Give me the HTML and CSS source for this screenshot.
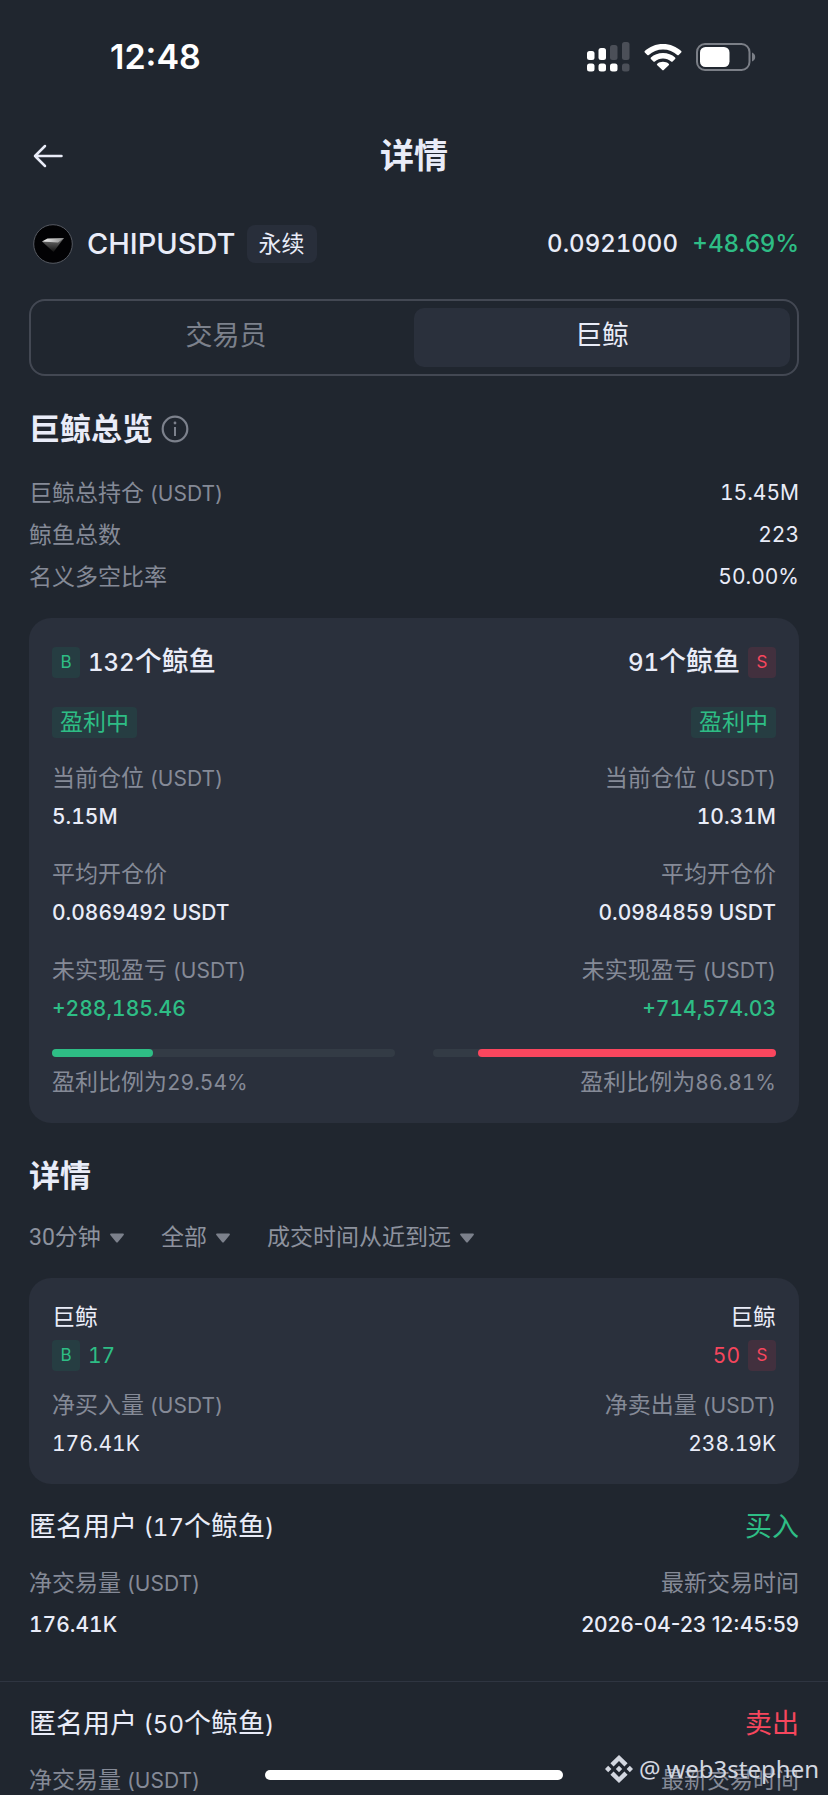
FILE: index.html
```html
<!DOCTYPE html>
<html lang="zh-CN">
<head>
<meta charset="utf-8">
<meta name="viewport" content="width=device-width, initial-scale=1">
<title>详情</title>
<link rel="stylesheet" href="styles.css">
</head>
<body>
<div class="app">
  <div class="status-bar">
    <span class="clock">12:48</span>
    <div class="status-icons">
      <svg width="43" height="30" viewBox="0 0 43 30" aria-hidden="true">
        <g fill="#fff">
          <rect x="0" y="9" width="7.500" height="9" rx="2.500"/><rect x="11.500" y="6" width="7.500" height="12" rx="2.500"/>
          <rect x="0" y="21.500" width="7.500" height="8" rx="2.500"/><rect x="11.500" y="21.500" width="7.500" height="8" rx="2.500"/><rect x="23" y="21.500" width="7.500" height="8" rx="2.500"/>
        </g>
        <g fill="#4b4f58">
          <rect x="23" y="3" width="7.500" height="15" rx="2.500"/><rect x="35" y="0" width="7.500" height="18" rx="2.500"/><rect x="35" y="21.500" width="7.500" height="8" rx="2.500"/>
        </g>
      </svg>
      <svg width="38" height="28" viewBox="0 0 38 28" aria-hidden="true">
        <path fill="#fff" d="M19 1C11.800 1 5.400 3.700.8 8.100c-.5.5-.5 1 0 1.500l2.500 2.400c.5.500 1 .4 1.500 0C8.500 8.500 13.500 6.500 19 6.500s10.500 2 14.200 5.500c.5.400 1 .5 1.500 0l2.500-2.400c.5-.5.500-1 0-1.500C32.600 3.700 26.200 1 19 1z"/>
        <path fill="#fff" d="M19 10c-4.700 0-8.900 1.700-12.100 4.500-.5.500-.5 1 0 1.500l2.500 2.400c.5.500 1 .4 1.500 0 2.200-1.800 5-2.900 8.100-2.900s5.900 1.100 8.100 2.900c.5.400 1 .5 1.500 0l2.500-2.400c.5-.5.500-1 0-1.500C27.900 11.700 23.700 10 19 10z"/>
        <path fill="#fff" d="M19 18.800c-2.200 0-4.200.7-5.700 1.900-.6.500-.5 1 0 1.500l5 4.900c.5.500.9.500 1.400 0l5-4.900c.5-.5.600-1 0-1.500-1.500-1.200-3.500-1.900-5.700-1.900z"/>
      </svg>
      <svg width="60" height="28" viewBox="0 0 60 28" aria-hidden="true">
        <rect x="1" y="1" width="52.500" height="26" rx="8" fill="none" stroke="#7b7f87" stroke-width="2"/>
        <rect x="4" y="4" width="29.500" height="20" rx="5.500" fill="#fff"/>
        <path d="M56 9.500c2 .8 3.200 2.500 3.200 4.500S58 17.700 56 18.500z" fill="#7b7f87"/>
      </svg>
    </div>
  </div>

  <header class="nav">
    <button class="back" type="button" aria-label="返回">
      <svg width="30" height="24" viewBox="0 0 30 24" fill="none" stroke="#e9ecf8" stroke-width="2.500" stroke-linecap="round" stroke-linejoin="round"><path d="M28.500 12H2M12 2 2 12l10 10"/></svg>
    </button>
    <h1>详情</h1>
  </header>

  <main>
    <div class="pair">
      <svg class="coin" width="40" height="40" viewBox="0 0 40 40" aria-hidden="true">
        <defs>
          <linearGradient id="face" x1="0" y1="0" x2="1" y2="0"><stop offset="0" stop-color="#f4f4f4"/><stop offset="1" stop-color="#8c8c8c"/></linearGradient>
          <linearGradient id="tip" x1="0" y1="0" x2="0" y2="1"><stop offset="0" stop-color="#777"/><stop offset="1" stop-color="#111"/></linearGradient>
        </defs>
        <circle cx="20" cy="20" r="19.300" fill="#020204" stroke="#565a62" stroke-width="1"/>
        <path d="M9 17.500 31 14 20.500 28z" fill="url(#tip)"/>
        <path d="M9 17.500 14.500 14.500 31 14 25 18.500z" fill="url(#face)"/>
      </svg>
      <span class="symbol">CHIPUSDT</span>
      <span class="tag">永续</span>
      <span class="price">0.0921000</span>
      <span class="change up">+48.69%</span>
    </div>

    <div class="tabs" role="tablist">
      <button type="button" role="tab" aria-selected="false" class="tab">交易员</button>
      <button type="button" role="tab" aria-selected="true" class="tab active">巨鲸</button>
    </div>

    <section>
      <div class="heading">
        <h2>巨鲸总览</h2>
        <button class="info" type="button" aria-label="说明">
          <svg width="28" height="28" viewBox="0 0 28 28" fill="none" stroke="#7c818c"><circle cx="14" cy="14" r="12.300" stroke-width="2.200"/><path d="M14 12v9" stroke-width="2"/><circle cx="14" cy="8" r="1.400" fill="#7c818c" stroke="none"/></svg>
        </button>
      </div>
      <dl class="summary">
        <div><dt>巨鲸总持仓<span class="lat"> (USDT)</span></dt><dd>15.45M</dd></div>
        <div><dt>鲸鱼总数</dt><dd>223</dd></div>
        <div><dt>名义多空比率</dt><dd>50.00%</dd></div>
      </dl>

      <div class="card overview">
        <div class="side">
          <div class="count"><span class="badge buy">B</span><span><span class="lat">132</span>个鲸鱼</span></div>
          <span class="state">盈利中</span>
          <dl class="stats">
            <div><dt>当前仓位<span class="lat"> (USDT)</span></dt><dd>5.15M</dd></div>
            <div><dt>平均开仓价</dt><dd>0.0869492 USDT</dd></div>
            <div><dt>未实现盈亏<span class="lat"> (USDT)</span></dt><dd class="up">+288,185.46</dd></div>
          </dl>
          <div class="bar"><div class="fill buy-fill" style="width:29.54%"></div></div>
          <p class="ratio">盈利比例为<span class="lat">29.54%</span></p>
        </div>
        <div class="side right">
          <div class="count"><span><span class="lat">91</span>个鲸鱼</span><span class="badge sell">S</span></div>
          <span class="state">盈利中</span>
          <dl class="stats">
            <div><dt>当前仓位<span class="lat"> (USDT)</span></dt><dd>10.31M</dd></div>
            <div><dt>平均开仓价</dt><dd>0.0984859 USDT</dd></div>
            <div><dt>未实现盈亏<span class="lat"> (USDT)</span></dt><dd class="up">+714,574.03</dd></div>
          </dl>
          <div class="bar"><div class="fill sell-fill" style="width:86.81%"></div></div>
          <p class="ratio">盈利比例为<span class="lat">86.81%</span></p>
        </div>
      </div>
    </section>

    <section class="details">
      <div class="heading"><h2>详情</h2></div>
      <div class="filters">
        <label class="filter"><select aria-label="时间范围"><option>30分钟</option></select><svg width="14" height="10" viewBox="0 0 14 10" aria-hidden="true"><path d="M1 .5h12c.8 0 1.200.8.7 1.400L8 9c-.6.700-1.400.7-2 0L.3 1.900C-.2 1.300.2.500 1 .5z" fill="#7c818c"/></svg></label>
        <label class="filter"><select aria-label="类型"><option>全部</option></select><svg width="14" height="10" viewBox="0 0 14 10" aria-hidden="true"><path d="M1 .5h12c.8 0 1.200.8.7 1.400L8 9c-.6.700-1.400.7-2 0L.3 1.900C-.2 1.300.2.500 1 .5z" fill="#7c818c"/></svg></label>
        <label class="filter"><select aria-label="排序"><option>成交时间从近到远</option></select><svg width="14" height="10" viewBox="0 0 14 10" aria-hidden="true"><path d="M1 .5h12c.8 0 1.200.8.7 1.400L8 9c-.6.700-1.400.7-2 0L.3 1.900C-.2 1.300.2.500 1 .5z" fill="#7c818c"/></svg></label>
      </div>

      <div class="card flow">
        <div class="side">
          <p class="who">巨鲸</p>
          <div class="tally up"><span class="badge buy">B</span><span>17</span></div>
          <dl class="stats"><div><dt>净买入量<span class="lat"> (USDT)</span></dt><dd>176.41K</dd></div></dl>
        </div>
        <div class="side right">
          <p class="who">巨鲸</p>
          <div class="tally down"><span>50</span><span class="badge sell">S</span></div>
          <dl class="stats"><div><dt>净卖出量<span class="lat"> (USDT)</span></dt><dd>238.19K</dd></div></dl>
        </div>
      </div>
    </section>

    <ul class="trades">
      <li>
        <div class="row title"><h3>匿名用户<span class="lat"> (17</span>个鲸鱼<span class="lat">)</span></h3><span class="up">买入</span></div>
        <div class="row label"><span>净交易量<span class="lat"> (USDT)</span></span><span>最新交易时间</span></div>
        <div class="row value"><span>176.41K</span><time datetime="2026-04-23T12:45:59">2026-04-23 12:45:59</time></div>
      </li>
      <li>
        <div class="row title"><h3>匿名用户<span class="lat"> (50</span>个鲸鱼<span class="lat">)</span></h3><span class="down">卖出</span></div>
        <div class="row label"><span>净交易量<span class="lat"> (USDT)</span></span><span>最新交易时间</span></div>
      </li>
    </ul>
  </main>

  <div class="home-indicator"></div>
  <div class="watermark">
    <svg width="28" height="28" viewBox="0 0 28 28" fill="currentColor" aria-hidden="true">
      <path d="M8.600 11.500 14 6.100l5.400 5.400 3.200-3.200L14 0 5.400 8.300zM0 14l3.200-3.200L6.400 14l-3.200 3.200zM8.600 16.500 14 21.900l5.400-5.400 3.200 3.200L14 28l-8.600-8.300zM21.600 14l3.200-3.200L28 14l-3.200 3.200zM17.200 14 14 10.800 10.800 14l3.200 3.200z"/>
    </svg>
    <span>@</span><span>web3stephen</span>
  </div>
</div>
</body>
</html>
```
FILE: styles.css
```css
* {
  box-sizing: border-box;
}

body,
h1,
h2,
h3,
p,
dl,
dd,
ul {
  margin: 0;
  padding: 0;
}

body {
  background: #20262f;
  color: #e9ecf8;
  font-family: Inter, "Noto Sans CJK SC", sans-serif;
  font-size: 23px;
  font-variant-numeric: tabular-nums;
  line-height: 30px;
}

button,
select {
  margin: 0;
  padding: 0;
  border: 0;
  background: none;
  color: inherit;
  font: inherit;
}

svg {
  display: block;
  flex: none;
}

.app {
  position: relative;
  min-height: 100vh;
  overflow: hidden;
}

.up {
  color: #2ebd85;
}

.down {
  color: #f6465d;
}

.lat {
  font-size: 21px;
  line-height: 1;
  white-space: pre;
}

/* Status bar */
.status-bar {
  display: flex;
  align-items: center;
  justify-content: space-between;
  height: 113px;
  padding: 0 72px 0 110px;
}

.clock {
  color: #fff;
  font-size: 34px;
  font-variant-numeric: normal;
  font-weight: 600;
}

.status-icons {
  display: flex;
  align-items: center;
  gap: 14px;
}

/* Navigation */
.nav {
  display: grid;
  grid-template-columns: 1fr auto 1fr;
  align-items: center;
  height: 86px;
  padding: 0 33px;
}

.back {
  justify-self: start;
}

.nav h1 {
  font-size: 34px;
  font-weight: 700;
  line-height: 42px;
}

/* Pair */
.pair {
  display: flex;
  align-items: center;
  height: 89px;
  padding: 0 29px;
}

.coin {
  margin: 0 14px 0 4px;
}

.symbol {
  font-size: 29px;
  font-weight: 500;
}

.tag {
  margin-left: 11px;
  padding: 0 12px;
  border-radius: 8px;
  background: #282e3a;
  line-height: 38px;
}

.price {
  margin-left: auto;
  font-size: 24px;
  font-weight: 500;
}

.change {
  margin-left: 14px;
  font-size: 24px;
  font-variant-numeric: normal;
  font-weight: 500;
}

/* Tabs */
.tabs {
  display: grid;
  grid-template-columns: 1fr 1fr;
  margin: 11px 29px 0;
  padding: 7px;
  border: 2px solid #434853;
  border-radius: 16px;
}

.tab {
  height: 59px;
  padding-bottom: 3px;
  border-radius: 10px;
  color: #7c818c;
  font-size: 27px;
}

.tab.active {
  background: #2a303c;
  color: #e9ecf8;
}

/* Headings */
.heading {
  display: flex;
  align-items: center;
  gap: 8px;
  margin: 32px 29px 0;
}

.heading h2 {
  font-size: 31px;
  font-weight: 700;
  line-height: 42px;
}

/* Summary */
.summary {
  margin: 22px 29px 0;
}

.summary div {
  display: flex;
  justify-content: space-between;
  line-height: 42px;
}

dt,
.ratio,
.label {
  color: #858a97;
}

.summary dd {
  font-size: 21px;
}

/* Cards */
.card {
  display: grid;
  grid-template-columns: 1fr 1fr;
  gap: 38px;
  padding: 0 23px;
  margin: 0 29px;
  border-radius: 22px;
  background: #2a303c;
}

.side {
  display: flex;
  flex-direction: column;
  align-items: flex-start;
}

.side.right {
  align-items: flex-end;
  text-align: right;
}

.badge {
  min-width: 28px;
  border-radius: 4px;
  font-size: 17px;
  font-weight: 400;
  line-height: 31px;
  text-align: center;
}

.badge.buy {
  background: #263d42;
  color: #2ebd85;
}

.badge.sell {
  background: #42303e;
  color: #f6465d;
}

.overview {
  margin-top: 20px;
  padding-top: 28px;
  padding-bottom: 26px;
}

.count {
  display: flex;
  align-items: center;
  gap: 8px;
  font-size: 27px;
  font-weight: 500;
  line-height: 32px;
}

.count .lat {
  font-size: 24px;
}

.state {
  margin-top: 29px;
  padding: 0 8px;
  border-radius: 4px;
  background: #263d42;
  color: #2ebd85;
  line-height: 31px;
}

.stats {
  margin-top: 25px;
}

.stats div + div {
  margin-top: 27px;
}

.stats dd {
  margin-top: 9px;
  font-size: 21px;
}

.overview dd {
  font-weight: 500;
}

.bar {
  display: flex;
  width: 100%;
  height: 8px;
  margin-top: 25px;
  border-radius: 4px;
  background: #333b45;
}

.right .bar {
  justify-content: flex-end;
}

.fill {
  border-radius: 4px;
}

.buy-fill {
  background: #2ebd85;
}

.sell-fill {
  background: #fa465e;
}

.ratio {
  margin-top: 10px;
}

/* Filters */
.filters {
  display: flex;
  gap: 37px;
  margin: 26px 29px 0;
}

.filter {
  display: flex;
  align-items: center;
  gap: 9px;
  height: 30px;
  color: #8d929e;
}

.filter select {
  appearance: none;
  font-family: Roboto, "Noto Sans CJK SC", sans-serif;
  line-height: 30px;
}

/* Net flow */
.flow {
  margin-top: 25px;
  padding-top: 24px;
  padding-bottom: 25px;
}

.tally {
  display: flex;
  align-items: center;
  gap: 8px;
  margin-top: 8px;
  font-size: 21px;
}

.flow .stats {
  margin-top: 19px;
}

/* Trades */
.trades {
  list-style: none;
}

.trades li {
  padding: 24px 29px 41px;
}

.trades li + li {
  padding-top: 23px;
  padding-bottom: 0;
  border-top: 1px solid #2f3541;
}

.row {
  display: flex;
  justify-content: space-between;
}

.title,
.title h3 {
  font-size: 27px;
  font-weight: 400;
  line-height: 38px;
}

.title .lat {
  font-size: 24px;
  line-height: 1;
}

.label {
  margin-top: 22px;
}

.value {
  margin-top: 12px;
  font-size: 21px;
  font-weight: 500;
}

.value time {
  font-variant-numeric: normal;
}

/* Overlays */
.home-indicator {
  position: absolute;
  right: 0;
  bottom: 15px;
  left: 0;
  width: 36%;
  height: 10px;
  margin: 0 auto;
  border-radius: 5px;
  background: #fff;
}

.watermark {
  position: absolute;
  right: 9px;
  bottom: 10px;
  display: flex;
  align-items: center;
  gap: 6px;
  color: #d3d7e0;
  font-family: "Noto Sans", sans-serif;
  font-size: 24px;
  line-height: 32px;
}
```
